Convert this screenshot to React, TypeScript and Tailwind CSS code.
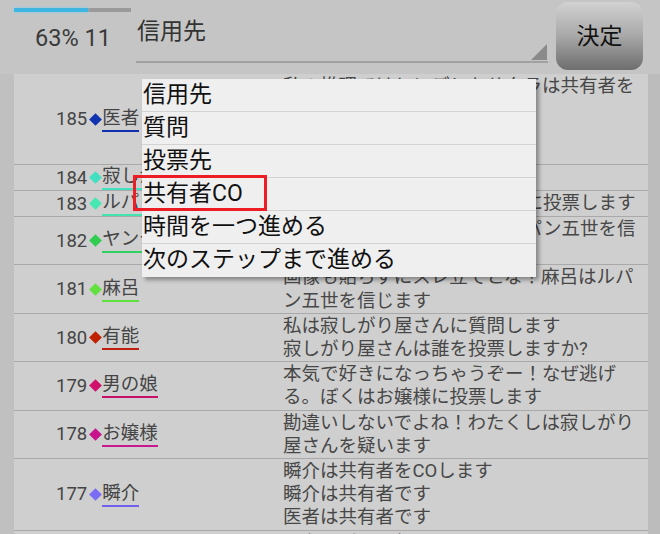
import React from "react";

type Row = {
  no: number;
  name: string;
  diamond: string;
  underline: string;
  lines: string[];
  fixed?: string;
};

const rows: Row[] = [
  {
    no: 185,
    name: "医者",
    diamond: "bg-[#1034b0]",
    underline: "border-[#1030b0]",
    lines: ["私の推理ではヤンデレかサクラは共有者を", "名乗り出てください", "医者は寂しがり屋さんを", "疑います"],
    fixed: "h-[91px]",
  },
  {
    no: 184,
    name: "寂しがり屋",
    diamond: "bg-[#40e0c0]",
    underline: "border-[#40e0c0]",
    lines: ["寂しいよぉ…"],
  },
  {
    no: 183,
    name: "ルパン五世",
    diamond: "bg-[#44e8b0]",
    underline: "border-[#44e4b0]",
    lines: ["ルパン五世は寂しがり屋さんに投票します"],
  },
  {
    no: 182,
    name: "ヤンデレ",
    diamond: "bg-[#30cc50]",
    underline: "border-[#30d060]",
    lines: ["ヤンデレはやっぱりここでルパン五世を信", "じます"],
  },
  {
    no: 181,
    name: "麻呂",
    diamond: "bg-[#62e040]",
    underline: "border-[#60e040]",
    lines: ["画像も貼らずにスレ立てとな！麻呂はルパ", "ン五世を信じます"],
  },
  {
    no: 180,
    name: "有能",
    diamond: "bg-[#c02000]",
    underline: "border-[#c02010]",
    lines: ["私は寂しがり屋さんに質問します", "寂しがり屋さんは誰を投票しますか?"],
  },
  {
    no: 179,
    name: "男の娘",
    diamond: "bg-[#d0106a]",
    underline: "border-[#c8106a]",
    lines: ["本気で好きになっちゃうぞー！なぜ逃げ", "る。ぼくはお嬢様に投票します"],
  },
  {
    no: 178,
    name: "お嬢様",
    diamond: "bg-[#c8148c]",
    underline: "border-[#c81890]",
    lines: ["勘違いしないでよね！わたくしは寂しがり", "屋さんを疑います"],
  },
  {
    no: 177,
    name: "瞬介",
    diamond: "bg-[#7a6cf5]",
    underline: "border-[#7060f0]",
    lines: ["瞬介は共有者をCOします", "瞬介は共有者です", "医者は共有者です"],
  },
  {
    no: 176,
    name: "医者",
    diamond: "bg-[#1034b0]",
    underline: "border-[#1030b0]",
    lines: ["医者は瞬介を信じます", "寂しがり屋さんは", "嘘つきです"],
  },
];

const menu = ["信用先", "質問", "投票先", "共有者CO", "時間を一つ進める", "次のステップまで進める"];

export default function App() {
  return (
    <div className="relative w-[660px] h-[534px] overflow-hidden bg-[#c5c5c5] font-['Roboto','Noto_Sans_CJK_JP',sans-serif]">
      {/* top bar */}
      <div className="flex h-[74px]">
        <div className="w-[136px] pl-[14px] pt-[8px] flex flex-col">
          <div className="flex w-[117px] h-[4px] bg-[#9a9a9a]">
            <div className="w-[74px] h-full bg-[#3fb5e2] shadow-[0_0_3px_#7fd3f3]" />
          </div>
          <div className="mt-[12px] ml-[21px] text-[23.5px] leading-[28px] text-[#3a3a3a] whitespace-nowrap">63% 11</div>
        </div>
        <div className="relative w-[412px] h-[63px] border-b-2 border-[#a0a0a0]">
          <div className="pt-[20px] pl-[1px] text-[23px] leading-[23px] text-[#333]">信用先</div>
          <svg className="absolute right-[1px] bottom-[1px]" width="16" height="16" viewBox="0 0 16 16">
            <polygon points="16,0 16,16 0,16" fill="#8a8a8a" />
          </svg>
        </div>
        <div className="ml-[8px] mt-[2px] w-[87px] h-[68px] rounded-[12px] bg-gradient-to-b from-[#d2d2d2] via-[#a8a8a8] to-[#6e6e6e] flex items-center justify-center">
          <span className="text-[23px] leading-[23px] text-[#111]">決定</span>
        </div>
      </div>

      {/* list */}
      <div className="flex">
        <div className="w-[14px] bg-[#c0c0c0]" />
        <div className="w-[634px] bg-[#cfcfcf]">
          {rows.map((r) => (
            <div key={r.no} className={`flex border-b border-[#a9a9a9] ${r.fixed ?? ""}`}>
              <div className="w-[269px] shrink-0 pl-[42px] flex items-center min-h-[25px] text-[18.5px] text-[#444] whitespace-nowrap">
                <span className="leading-[22px]">{r.no}</span>
                <span className={`inline-block w-[9px] h-[9px] rotate-45 ml-[4px] mr-[2px] ${r.diamond}`} />
                <span className={`inline-block leading-[22px] pb-[1px] border-b-2 ${r.underline}`}>{r.name}</span>
              </div>
              <div className="pt-[1px] text-[18.5px] leading-[23.2px] text-[#474747] whitespace-nowrap overflow-hidden">
                {r.lines.map((l, i) => (
                  <div key={i}>{l}</div>
                ))}
              </div>
            </div>
          ))}
        </div>
        <div className="flex-1 bg-[#bcbcbc]" />
      </div>

      {/* dropdown menu */}
      <div className="absolute left-[142px] top-[79px] w-[394px] bg-[#efefef] shadow-[3px_3px_4px_rgba(0,0,0,0.35)]">
        {menu.map((m, i) => (
          <div
            key={m}
            className={`h-[33px] pl-[1px] text-[23px] leading-[32px] text-[#111] whitespace-nowrap ${
              i < menu.length - 1 ? "border-b border-[#d3d3d3]" : ""
            }`}
          >
            {m}
          </div>
        ))}
      </div>

      {/* red highlight */}
      <div className="absolute left-[133px] top-[175px] w-[134px] h-[36px] border-[3px] border-[#ee1c24]" />
    </div>
  );
}
